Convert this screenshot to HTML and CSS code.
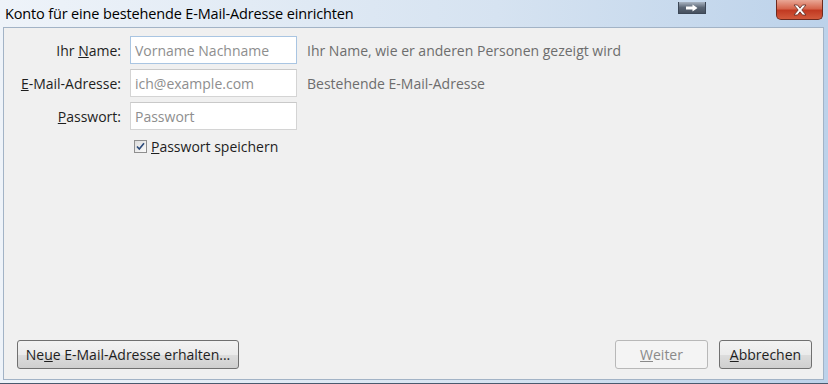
FILE: index.html
```html
<!DOCTYPE html>
<html>
<head>
    <title>Konto einrichten</title>
    <link rel="stylesheet" href="styles.css">
</head>
<body>
    <div class="window">
        <div class="titlebar">
            <span class="title">Konto für eine bestehende E-Mail-Adresse einrichten</span>
            <span class="arrow-btn">
                <svg width="14" height="8" viewBox="0 0 14 8"><path d="M1 2.5h6.5V0.5L12.5 4 7.5 7.5V5.5H1z" fill="#fff"/></svg>
            </span>
            <span class="close-btn">
                <svg width="16" height="12" viewBox="0 0 16 12"><path d="M2 1h3.5L8 4.2 10.5 1H14L9.8 6 14 11h-3.5L8 7.8 5.5 11H2l4.2-5z" fill="#fff" stroke="#5a2a22" stroke-width="0.8"/></svg>
            </span>
        </div>

        <div class="client">
            <div class="form">
                <label class="label"><span>Ihr <u>N</u>ame:</span></label>
                <input class="field focused" type="text" placeholder="Vorname Nachname">
                <span class="hint">Ihr Name, wie er anderen Personen gezeigt wird</span>

                <label class="label"><span><u>E</u>-Mail-Adresse:</span></label>
                <input class="field" type="text" placeholder="ich@example.com">
                <span class="hint">Bestehende E-Mail-Adresse</span>

                <label class="label"><span><u>P</u>asswort:</span></label>
                <input class="field" type="password" placeholder="Passwort">
                <span></span>

                <span></span>
                <label class="remember">
                    <span class="check">
                        <svg width="9" height="9" viewBox="0 0 9 9"><path d="M1 4.5l2.3 2.5L8 1.2" fill="none" stroke="#2b4a7a" stroke-width="1.6"/></svg>
                    </span>
                    <span><u>P</u>asswort speichern</span>
                </label>
                <span></span>
            </div>

            <div class="buttons">
                <button class="btn wide">Ne<u>u</u>e E-Mail-Adresse erhalten...</button>
                <span class="spacer"></span>
                <button class="btn disabled"><u>W</u>eiter</button>
                <button class="btn"><u>A</u>bbrechen</button>
            </div>
        </div>
    </div>
</body>
</html>
```

FILE: styles.css
```css
body { margin: 0; font-family: "Open Sans", "Noto Sans", sans-serif; font-size: 14px; color: #1e1e1e; }
.window {
    width: 828px;
    height: 384px;
    display: flex;
    flex-direction: column;
    background: linear-gradient(to right, #eef3f9, #d6e3f1 60%, #bcd2ea);
    border-bottom: 1px solid #4a5a6e;
    box-sizing: border-box;
}
.titlebar {
    height: 27px;
    display: flex;
    align-items: flex-start;
    padding: 0 5px 0 5px;
}
.title { font-size: 14.5px; color: #000; margin-top: 4px; letter-spacing: -0.15px; }
.arrow-btn {
    margin-left: auto;
    margin-top: 2px;
    width: 28px;
    height: 12px;
    display: flex;
    align-items: center;
    justify-content: center;
    border: 1px solid #3c4756;
    border-top: none;
    background: linear-gradient(#a9b4c2, #5b6675 50%, #46505e);
    box-sizing: border-box;
}
.close-btn {
    margin-left: 70px;
    width: 47px;
    height: 20px;
    display: flex;
    align-items: center;
    justify-content: center;
    border: 1px solid #6e2a1e;
    border-top: none;
    border-radius: 0 0 5px 5px;
    background: linear-gradient(#e9a796, #d6664d 45%, #c13a22 55%, #d25a3c);
    box-sizing: border-box;
}
.client {
    flex: 1;
    margin: 0 4px 3px 3px;
    background: #f0f0f0;
    border: 1px solid #a2b3c6;
    display: flex;
    flex-direction: column;
    padding: 8px 11px 10px 0;
}
.form {
    display: grid;
    grid-template-columns: 117px 167px 1fr;
    column-gap: 9px;
    row-gap: 5px;
    align-items: center;
}
.label { text-align: right; }
.field {
    height: 28px;
    box-sizing: border-box;
    border: 1px solid #d4d4d4;
    border-top-color: #c9c9c9;
    background: #fff;
    font: inherit;
    padding: 0 4px;
    outline: none;
}
.field.focused { border-color: #a9c5e2; }
.field::placeholder { color: #8e8e8e; }
.hint { color: #6d6d6d; margin-left: 1px; }
.remember { display: flex; align-items: center; gap: 4px; margin-left: 4px; margin-top: 2px; }
.check {
    width: 13px;
    height: 13px;
    box-sizing: border-box;
    border: 1px solid #8f8f8f;
    background: linear-gradient(135deg, #dcdcdc, #fbfbfb);
    display: flex;
    align-items: center;
    justify-content: center;
}
.buttons {
    margin-top: auto;
    display: flex;
    gap: 11px;
    padding-left: 13px;
}
.spacer { flex: 1; }
.btn {
    height: 29px;
    min-width: 93px;
    font: inherit;
    color: #1e1e1e;
    border: 1px solid #707070;
    border-radius: 3px;
    background: linear-gradient(#f2f2f2, #ebebeb 50%, #dddddd 50%, #cfcfcf);
    padding: 0 6px;
    white-space: nowrap;
}
.btn.wide { width: 222px; }
.btn.disabled {
    color: #8a8a8a;
    border-color: #b8b8b8;
    background: #f4f4f4;
}
```
